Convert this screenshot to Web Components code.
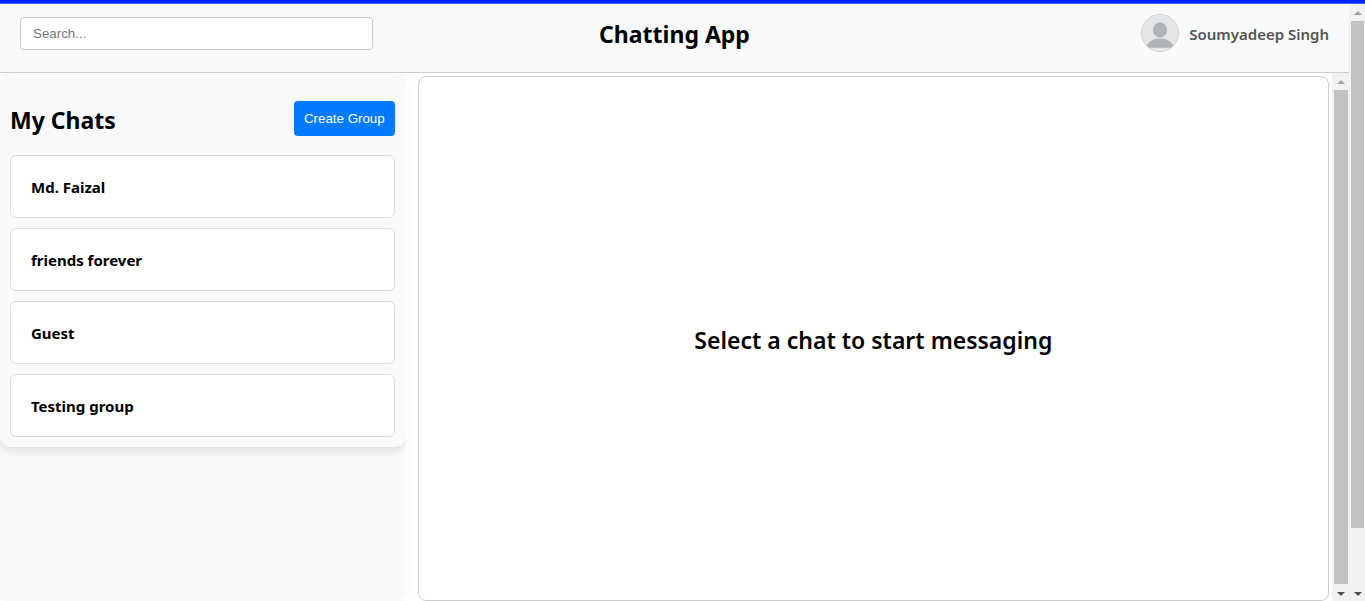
<!DOCTYPE html>
<html lang="en">
<head>
<meta charset="utf-8">
<title>Chatting App</title>
<style>
html, body { margin: 0; height: 100%; }
body { font-family: "Segoe UI", "Noto Sans", "Open Sans", sans-serif; color: #000; background: #fff; overflow: hidden; }
</style>
</head>
<body>
<chat-app></chat-app>
<script>
const define = (name, html) => customElements.define(name, class extends HTMLElement {
  constructor() {
    super();
    this.attachShadow({ mode: "open" }).innerHTML = html;
  }
});

define("scroll-rail", `
<style>
  :host { display: flex; flex-direction: column; flex: none; width: 16px; background: #f1f1f1; }
  svg { display: block; width: 16px; height: 17px; flex: none; }
  .lane { flex: 1; min-height: 0; padding: 0 1px 0 2px; }
  .thumb { background: #c1c1c1; height: var(--thumb, 100%); }
</style>
<svg viewBox="0 0 16 17" aria-hidden="true"><path d="M5 11h8L9 7z" fill="#a3a3a3"/></svg>
<div class="lane"><div class="thumb"></div></div>
<svg viewBox="0 0 16 17" aria-hidden="true"><path d="M5 8h8l-4 4z" fill="#505050"/></svg>`);

define("user-avatar", `
<style>
  :host { display: block; box-sizing: border-box; width: 38px; height: 38px; border: 1px solid #ccc; border-radius: 50%; overflow: hidden; }
  svg { display: block; width: 36px; height: 36px; }
</style>
<svg viewBox="0 0 36 36" role="img" aria-label="Profile picture">
  <rect width="36" height="36" fill="#e4e6e7"/>
  <ellipse cx="18" cy="15" rx="7" ry="7.6" fill="#aeb4b7"/>
  <path d="M4.500 31.500C6 26.500 12 23.500 18 23.500s12 3 13.500 8c-.5 1-1.500 1.300-2.500 1.300H7c-1 0-2-.3-2.500-1.300z" fill="#aeb4b7"/>
</svg>`);

define("app-header", `
<style>
  :host { display: grid; grid-template-columns: 1fr auto 1fr; align-items: center; padding: 10px 20px 20px; background: #f8f9fb; border-bottom: 1px solid #ccc; position: relative; z-index: 1; }
  input { box-sizing: border-box; width: 353px; max-width: 100%; height: 33px; padding: 0 12px; border: 1px solid #ccc; border-radius: 4px; background: #fff; font-family: "Liberation Sans", Arial, sans-serif; }
  input::placeholder { color: #757575; }
  h1 { margin: 0; padding-top: 2px; font-size: 23px; line-height: 32px; font-weight: 700; }
  .user { display: flex; justify-content: flex-end; align-items: center; gap: 10px; color: #555; font-size: 15px; line-height: 24px; font-weight: 600; }
  .user span { padding-top: 2px; }
</style>
<input type="search" placeholder="Search..." aria-label="Search">
<h1>Chatting App</h1>
<div class="user"><user-avatar></user-avatar><span><slot></slot></span></div>`);

define("chat-item", `
<style>
  :host { display: block; }
  button { display: block; width: 100%; box-sizing: border-box; padding: 21px 20px 19px; border: 1px solid #ddd; border-radius: 6px; background: #fff; color: #000; text-align: left; font: inherit; font-size: 15px; line-height: 21px; font-weight: 700; }
</style>
<button type="button"><slot></slot></button>`);

define("chat-list", `
<style>
  :host { display: block; box-sizing: border-box; width: 30%; flex: none; border-radius: 10px; background: #f8f9fb; box-shadow: 0 0 10px rgba(0,0,0,.05); }
  section { padding: 28px 10px 10px; border-radius: 10px; background: #f8f9fb; box-shadow: 0 4px 8px rgba(0,0,0,.1); }
  :host { overflow: clip; overflow-clip-margin: 0px; }
  header { display: flex; justify-content: space-between; align-items: center; margin-bottom: 19px; }
  h2 { margin: 0; padding-top: 3px; font-size: 23px; line-height: 32px; font-weight: 700; }
  header button { padding: 10px; border: 0; border-radius: 4px; background: #007bff; color: #fff; font-family: "Liberation Sans", Arial, sans-serif; line-height: 15px; }
  .items { display: grid; gap: 10px; }
</style>
<section>
  <header><h2>My Chats</h2><button type="button">Create Group</button></header>
  <div class="items"><slot></slot></div>
</section>`);

define("chat-panel", `
<style>
  :host { display: flex; flex: 1; min-width: 0; margin-left: 10px; background: #fff; position: relative; }
  .pad { display: flex; flex: 1; padding: 3px 3px 0; }
  .box { display: flex; flex: 1; align-items: center; justify-content: center; border: 1px solid #ccc; border-radius: 8px; }
  h2 { margin: 0; padding-top: 2px; font-size: 23px; line-height: 32px; font-weight: 600; text-align: center; }
  scroll-rail { width: 17px; }
</style>
<div class="pad"><div class="box"><h2><slot></slot></h2></div></div>
<scroll-rail></scroll-rail>`);

define("chat-app", `
<style>
  :host { display: flex; flex-direction: column; height: 100vh; }
  .bar { height: 3px; flex: none; background: #0026ff; border-bottom: 1px solid #4060ff; }
  .view { display: flex; flex: 1; min-height: 0; }
  .page { display: flex; flex-direction: column; flex: 1; min-width: 0; }
  main { display: flex; flex: 1; min-height: 0; }
  .view > scroll-rail { --thumb: 90%; }
</style>
<div class="bar"></div>
<div class="view">
  <div class="page">
    <app-header>Soumyadeep Singh</app-header>
    <main>
      <chat-list>
        <chat-item>Md. Faizal</chat-item>
        <chat-item>friends forever</chat-item>
        <chat-item>Guest</chat-item>
        <chat-item>Testing group</chat-item>
      </chat-list>
      <chat-panel>Select a chat to start messaging</chat-panel>
    </main>
  </div>
  <scroll-rail></scroll-rail>
</div>`);
</script>
</body>
</html>
